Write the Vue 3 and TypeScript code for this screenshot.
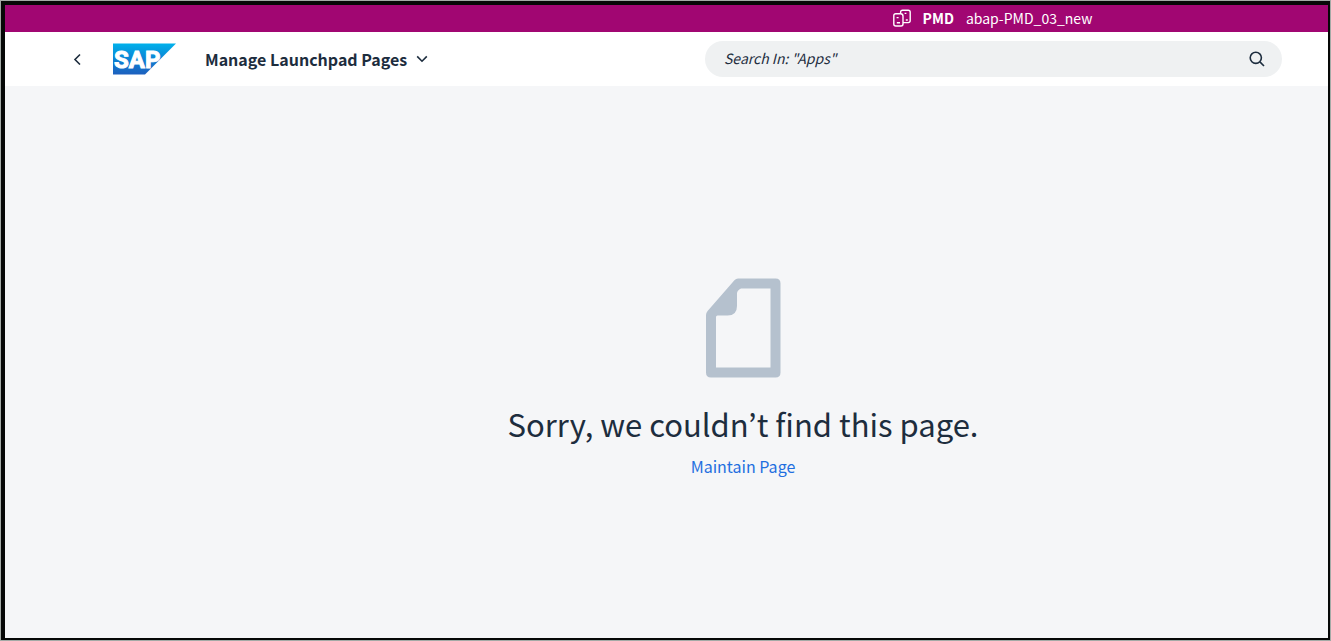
<script setup lang="ts">
import { ref } from 'vue'

const systemId = 'PMD'
const systemName = 'abap-PMD_03_new'
const title = 'Manage Launchpad Pages'
const query = ref('')
</script>

<template>
  <div class="frame">
    <div class="window">
      <div class="system-bar">
        <svg class="system-icon" viewBox="0 0 18 18" width="18" height="18" aria-hidden="true">
          <path d="M7.6 4.8V3.2Q7.6 1.2 9.6 1.2H15.2Q17.2 1.2 17.2 3.2V11.6Q17.2 13.6 15.2 13.6H10" />
          <path d="M7.6 4.8H2.8Q0.8 4.8 0.8 6.8V15Q0.8 17 2.8 17H8Q10 17 10 15V7.2Q10 4.8 7.6 4.8Z" />
          <path d="M3.6 8.6H5.6M3.8 13.8H7M11.6 4.4H13.4M12.8 11H14.8" />
        </svg>
        <strong>{{ systemId }}</strong>
        <span>{{ systemName }}</span>
      </div>

      <header class="shell">
        <div class="shell-start">
          <button class="back" type="button" aria-label="Back">
            <svg viewBox="0 0 8 12" width="8" height="12" aria-hidden="true">
              <path d="M7 1.5L2 6.5L7 11.5" />
            </svg>
          </button>
          <a class="logo" href="#" aria-label="SAP home">
            <svg viewBox="0 0 64 32" width="64" height="32">
              <defs>
                <linearGradient id="logo-fill" x1="0" y1="0" x2="0" y2="1">
                  <stop offset="0" stop-color="#00b1eb" />
                  <stop offset="0.5" stop-color="#0c83d4" />
                  <stop offset="1" stop-color="#1d60be" />
                </linearGradient>
              </defs>
              <path d="M0 0.5H63L32 31.5H0Z" fill="url(#logo-fill)" />
              <text class="logo-text" x="1" y="25">SAP</text>
            </svg>
          </a>
          <button class="title" type="button">
            <span>{{ title }}</span>
            <svg viewBox="0 0 12 8" width="12" height="8" aria-hidden="true">
              <path d="M1.2 1.4L6 6.2L10.8 1.4" />
            </svg>
          </button>
        </div>
        <form class="search" role="search" @submit.prevent>
          <input v-model="query" type="text" aria-label="Search In Apps" placeholder='Search In: "Apps"' />
          <button type="submit" aria-label="Search">
            <svg viewBox="0 0 16 16" width="16" height="16" aria-hidden="true">
              <circle cx="6.8" cy="6.8" r="5.6" />
              <path d="M10.9 10.9L15 15" />
            </svg>
          </button>
        </form>
      </header>

      <main class="message">
        <svg class="page-icon" viewBox="0 0 76 100" width="76" height="100" aria-hidden="true">
          <path
            fill-rule="evenodd"
            d="M33 0.5H70.5Q75.5 0.5 75.5 5.5V94.5Q75.5 99.5 70.5 99.5H6Q1 99.5 1 94.5V37Q1 34.8 2.6 33L29.4 2.3Q31 0.5 33 0.5ZM36 10.5Q32 12.5 32 15.5V28Q32 37.5 22.5 37.5H12.5Q11 37.5 11 39V89.5H65.5V10.5Z"
          />
        </svg>
        <h1>Sorry, we couldn’t find this page.</h1>
        <a href="#">Maintain Page</a>
      </main>
    </div>
  </div>
</template>

<style>
body {
  margin: 0;
}
</style>

<style scoped>
.frame {
  box-sizing: border-box;
  display: flex;
  min-height: 100vh;
  border: 1px solid #a3aaa6;
}

.window {
  display: flex;
  flex: 1;
  flex-direction: column;
  border: solid #060807;
  border-width: 4px 2px 2px 4px;
  background: #f5f6f8;
  color: #1d2d3e;
  font-family: "Noto Sans CJK KR", "Noto Sans", sans-serif;
  font-size: 16px;
}

svg {
  display: block;
  flex: none;
  fill: none;
  stroke: currentColor;
  stroke-width: 1.6;
}

button {
  padding: 0;
  border: 0;
  background: none;
  color: inherit;
  font: inherit;
  cursor: pointer;
}

.system-bar {
  display: flex;
  align-items: center;
  justify-content: center;
  gap: 12px;
  box-sizing: border-box;
  height: 27px;
  padding: 0 48px 1px 700px;
  background: #a10672;
  color: #fff;
  font-size: 14px;
  line-height: 24px;
}

.system-icon {
  stroke-width: 1.4;
}

.shell {
  display: flex;
  align-items: center;
  height: 54px;
  padding: 0 46px 0 64px;
  background: #fff;
}

.shell-start {
  display: flex;
  align-items: center;
  flex: 0 0 636px;
}

.back {
  display: flex;
  align-items: center;
  justify-content: center;
  width: 16px;
  height: 32px;
}

.logo {
  margin-left: 28px;
}

.logo svg {
  stroke: none;
}

.logo-text {
  fill: #fff;
  stroke: #fff;
  stroke-width: 1;
  font-family: Roboto, sans-serif;
  font-size: 24px;
  font-weight: 700;
}

.title {
  display: flex;
  align-items: center;
  gap: 9px;
  margin-left: 28px;
  font-weight: 700;
  line-height: 24px;
}

.search {
  display: flex;
  align-items: center;
  flex: 1;
  box-sizing: border-box;
  height: 36px;
  padding: 0 17px 0 19px;
  border-radius: 18px;
  background: #eff1f2;
}

.search input {
  flex: 1;
  min-width: 0;
  padding: 0 0 2px;
  border: 0;
  outline: 0;
  background: none;
  color: inherit;
  font: inherit;
  font-size: 14px;
}

.search input::placeholder {
  color: #1d2d3e;
  font-style: italic;
  opacity: 1;
}

.message {
  display: flex;
  flex: 1;
  flex-direction: column;
  align-items: center;
  padding: 192px 0 24px 153px;
}

.page-icon {
  fill: #b5c1ce;
  stroke: none;
}

h1 {
  margin: 22px 0 0;
  font-size: 31px;
  font-weight: 400;
  line-height: 48px;
}

.message a {
  margin-top: 6px;
  color: #1f6fe0;
  line-height: 24px;
  text-decoration: none;
}
</style>
